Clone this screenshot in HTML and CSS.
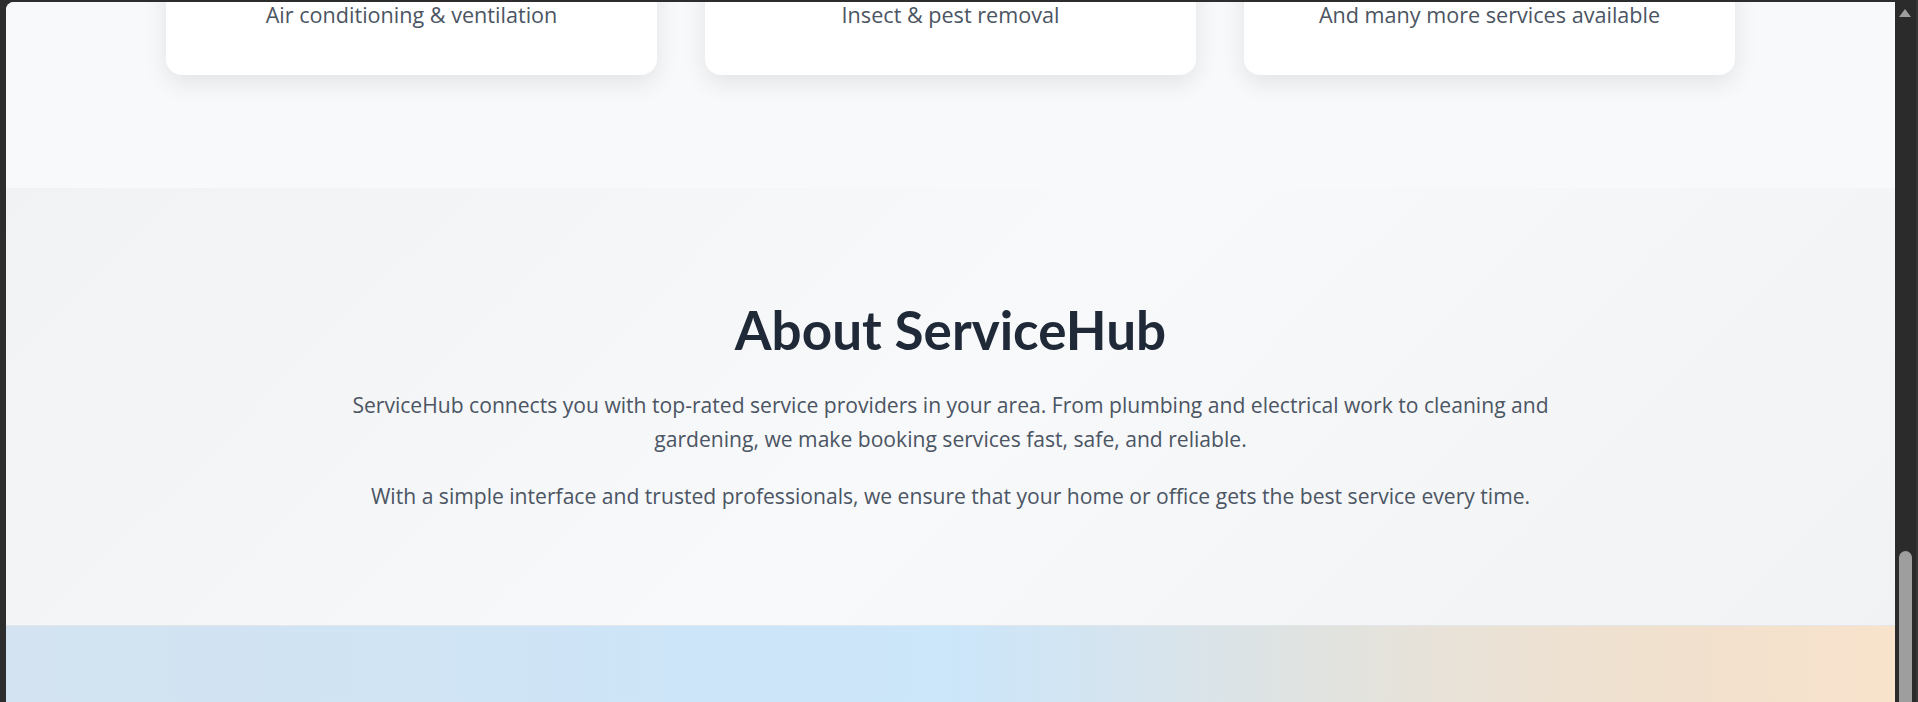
FILE: index.html
```html
<!DOCTYPE html>
<html lang="en">
<head>
<meta charset="utf-8">
<title>ServiceHub</title>
<link rel="stylesheet" href="styles.css">
</head>
<body>
<div class="window">
  <div class="frame-left"></div>
  <main class="viewport">
    <section class="services">
      <div class="services-grid">
        <div class="card"><p class="card-text">Air conditioning &amp; ventilation</p></div>
        <div class="card"><p class="card-text">Insect &amp; pest removal</p></div>
        <div class="card"><p class="card-text">And many more services available</p></div>
      </div>
    </section>
    <section class="about">
      <h2 class="about-title">About ServiceHub</h2>
      <p class="about-text">ServiceHub connects you with top-rated service providers in your area. From plumbing and electrical work to cleaning and gardening, we make booking services fast, safe, and reliable.</p>
      <p class="about-text">With a simple interface and trusted professionals, we ensure that your home or office gets the best service every time.</p>
    </section>
    <section class="banner"></section>
  </main>
  <div class="scrollbar">
    <div class="scroll-arrow"></div>
    <div class="scroll-thumb"></div>
  </div>
</div>
</body>
</html>
```

FILE: styles.css
```css
* { box-sizing: border-box; }
html, body { margin: 0; padding: 0; height: 100%; }
body {
  background: #2d2d2d;
  font-family: "Open Sans", "Noto Sans", sans-serif;
  overflow: hidden;
}
.window {
  display: flex;
  height: 702px;
}
.frame-left {
  width: 6px;
  flex: none;
}
.viewport {
  flex: 1;
  margin-top: 2px;
  border-top-left-radius: 8px;
  overflow: hidden;
  background: #f8f9fa;
  display: flex;
  flex-direction: column;
}
.services {
  background: #f8f9fa;
  padding: 0 16px 113px;
  flex: none;
}
.services-grid {
  max-width: 1601px;
  margin: -41px auto 0;
  display: grid;
  grid-template-columns: repeat(3, 1fr);
  gap: 48px;
  padding: 0 16px;
}
.card {
  background: #ffffff;
  border-radius: 16px;
  box-shadow: 0 8px 24px rgba(0, 0, 0, 0.09);
  padding: 40px 32px 46px;
  text-align: center;
}
.card-text {
  margin: 0;
  font-size: 21.6px;
  line-height: 28px;
  color: #4b5563;
}
.about {
  flex: none;
  background: linear-gradient(135deg, #f1f2f4 0%, #f8f9fb 50%, #f1f2f4 100%);
  padding: 112px 32px 112px;
  text-align: center;
}
.about-title {
  margin: 0 0 28px;
  font-family: "Lato", "Open Sans", sans-serif;
  font-size: 53px;
  line-height: 60px;
  font-weight: 700;
  color: #1f2937;
}
.about-text {
  max-width: 1240px;
  margin: 0 auto 23px;
  font-size: 21.1px;
  line-height: 34px;
  color: #4b5563;
}
.about-text:last-child { margin-bottom: 0; }
.banner {
  flex: 1;
  min-height: 200px;
  border-top: 1px solid #e4e7ea;
  background: linear-gradient(90deg, #d3e3f1 0%, #d0e4f4 22%, #cde5f8 36%, #cce6fa 50%, #d6e4ee 60%, #e1e3df 70%, #e8e2d8 76%, #eee1d1 83%, #f1e0cd 89%, #f8e3cc 100%);
}
.scrollbar {
  width: 23px;
  flex: none;
  background: #2b2b2b;
  box-shadow: inset -2px 0 0 #363636;
  display: flex;
  flex-direction: column;
  align-items: flex-start;
  padding-left: 4px;
}
.scroll-arrow {
  margin-top: 9px;
  width: 0;
  height: 0;
  border-left: 6.5px solid transparent;
  border-right: 6.5px solid transparent;
  border-bottom: 8px solid #9e9e9e;
}
.scroll-thumb {
  margin-top: auto;
  width: 13px;
  height: 151px;
  background: #9e9e9e;
  border-radius: 6.5px 6.5px 0 0;
}
```
